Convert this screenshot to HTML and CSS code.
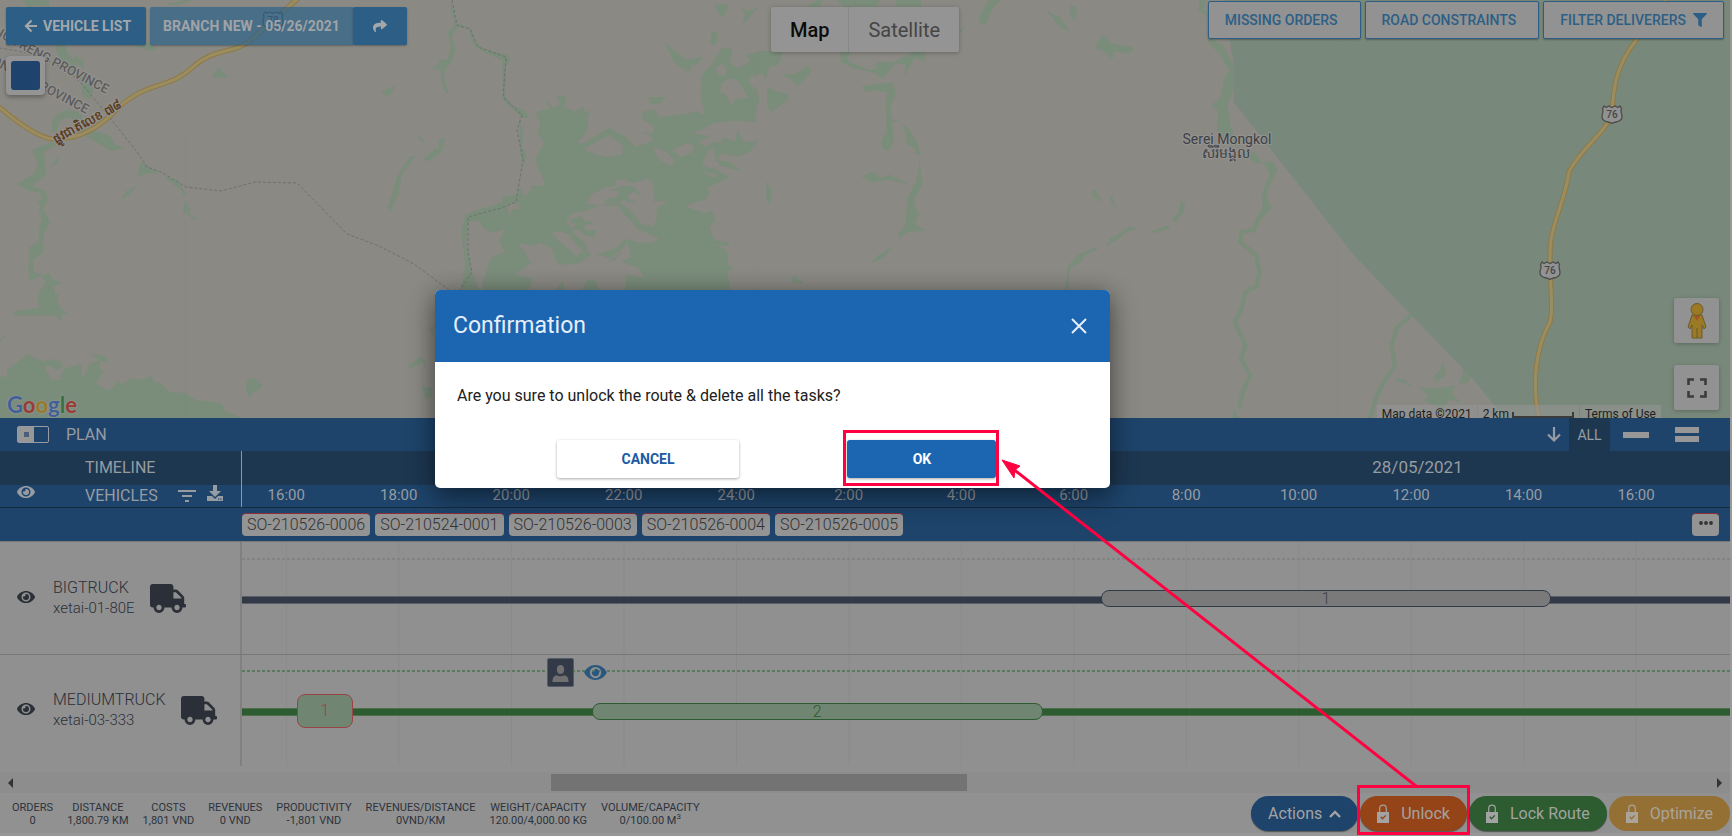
FILE: index.html
```
<!DOCTYPE html>
<html lang="en">
<head>
<meta charset="utf-8">
<meta name="viewport" content="width=device-width, initial-scale=1">
<title>Plan - Confirmation</title>
<link rel="stylesheet" href="styles.css">
</head>
<body>
<svg class="defs" aria-hidden="true">
  <symbol id="eye" viewBox="0 64 576 384"><path d="M572.52 241.4C518.29 135.59 410.93 64 288 64S57.68 135.64 3.48 241.41a32.35 32.35 0 0 0 0 29.19C57.71 376.41 165.07 448 288 448s230.32-71.64 284.52-177.41a32.35 32.35 0 0 0 0-29.19zM288 400a144 144 0 1 1 144-144 143.93 143.93 0 0 1-144 144zm0-240a95.31 95.31 0 0 0-25.31 3.79 47.85 47.85 0 0 1-66.9 66.9A95.78 95.78 0 1 0 288 160z"/></symbol>
  <symbol id="truck" viewBox="0 0 640 512"><path d="M624 352h-16V243.9c0-12.7-5.1-24.9-14.1-33.9L494 110.1c-9-9-21.2-14.1-33.9-14.1H416V48c0-26.5-21.5-48-48-48H48C21.5 0 0 21.5 0 48v320c0 26.5 21.5 48 48 48h16c0 53 43 96 96 96s96-43 96-96h128c0 53 43 96 96 96s96-43 96-96h48c8.8 0 16-7.2 16-16v-32c0-8.8-7.2-16-16-16zM160 464c-26.5 0-48-21.5-48-48s21.5-48 48-48 48 21.5 48 48-21.5 48-48 48zm320 0c-26.5 0-48-21.5-48-48s21.5-48 48-48 48 21.5 48 48-21.5 48-48 48zm80-208H416V144h44.1l99.9 99.9V256z"/></symbol>
  <symbol id="lock" viewBox="0 0 12 20"><path d="M2.700 9V4.500a3.300 3.300 0 0 1 6.600 0V9" fill="none" stroke="currentColor" stroke-width="1.200"/><path fill-rule="evenodd" d="M0 8h12v11H0zM3.200 13.200l2.300 2.600 3.800-4-1-.9-2.800 2.900-1.300-1.500z"/></symbol>
  <symbol id="shield" viewBox="0 0 22 20"><path d="M3 2l2 1.500L8 2l3 1.500L14 2l3 1.500L19 2l1.500 2.500c-1.500 3 .5 5 .5 8 0 4-3 5-6 5.500-2 .3-3 .5-4 1.500-1-1-2-1.200-4-1.500-3-.5-6-1.500-6-5.500 0-3 2-5 .5-8z" fill="#929292" stroke="#4c4c4c" stroke-width="1.300"/></symbol>
</svg>

<div class="page">
  <section class="map" aria-label="Map">
    <svg class="map-art" viewBox="0 0 1732 418" preserveAspectRatio="xMidYMid slice" aria-hidden="true">
      <g class="wood" transform="scale(.33333)">
        <path d="M68 0l20 22 30-8 32 8V0zM500 14l60-14h25l-45 14zM410 140l40-14 22 20-8 8zM170 120l28 4 6 34 50 50 2-22-30-24 6 30 10 30 46 30-14 46-22-6-8-54-50-44-22-40zM640 232l18-32 30 34zM1146 276l46-22-24 38zM1300 208l20-18v16zM160 398c-10-50 30-72 62-66 30 4 42 36 40 54l70 20 14 26 30 12-40 8-50-30-50-26c2-20-10-40-30-42-20 0-34 22-32 40zM100 448l56-20 30-2-50 30 4 70-40 32 40 16 6 24-16 36 20 26h-20l-10-26 10-36-8-20-40-8-30-20 50-26 14-24zM152 500l28-36-4 26zM366 600l16-28 32-16-20 26zM415 530l8-42 16 4 40 28h-30zM504 530l30 10 30 48-10-2-6-14-44-34zM550 640l10-40 12 20 2 24 20 12-10 4-20-20zM1248 400l36 28-20-6zM1270 480l40-36 10 4v14l-30 20zM1250 468l-40 52-12 60-24 56-8-12 14-44 14-52 40-60z"/>
        <path d="M126 600h12l-4 34 20 30-20 40-2 56-32 20 6 36 24 10 20-8 10 18 26 14-22 10 4 26 14-6-10 14 14 34 20 12-20 4 4 22-22-20H44v-12l78-10-8-26 12-30 14-20-14-20-34 14-4-40 4-30-2-30 28-16 4-50 16-40-24-30zM0 1020l28-18-28 26zM274 1058l50 14v16l-24-6zM0 1128l24 4v-20l60-50 50 22c20-8 40-8 56 4v16l-20 6c-12-10-26-20-30-8 0 20 16 30 20 38h26l-4-14 16-20 50-16v40l8-4 14-34 34-12-4 22 14 10-22 36 34 24 20-14 10-18 12 14 30-20 36 6 22-14 10 20 20 2 26 30h44l40 26 30-2 42 10 10 20 50 22v10H0zM744 1140l20-8 28 24-10 12-20 10-10 16-10-20z"/>
        <path d="M1226 1096l40-24 14 10 4 30-14-26-36 20zM1268 1160l30 4 2 26-20 8zM1290 990l15-14v30z"/>
      </g>
      <g class="wood" transform="translate(440 0) scale(.35714 .33333)">
        <path d="M34 0L48 72 90 84 104 130 135 150 190 164 200 180 188 200 187 290 205 315 240 332 254 354 234 354 180 300 178 182 130 158 95 135 84 86 52 80 36 106 46 150 34 190 18 205 14 240 30 292 10 260 4 212 0 204V180L24 178 34 140 24 96 44 76 32 30zM225 350L236 400 232 440 246 465 238 495 228 460zM74 640L62 700 70 760 74 800 60 870H112L86 800 96 730 76 700 96 668z"/>
        <path d="M298 300L318 322 328 322 340 304 328 292 340 286 356 290 352 310 350 322 382 334 402 320 408 334 424 336 416 350 418 380 408 405 388 430 410 428 440 408 476 384 520 408 550 440 578 432 600 420 594 408 565 396 600 400 602 378 572 360 568 336 606 328 614 350 690 342 720 334 745 348 732 290 736 225 762 195 790 145 822 146 820 170 812 185 836 205 870 185 860 165 900 153 964 156 950 195 925 200 916 235 905 220 872 232 866 245 890 270 898 305 888 320 886 366 830 362 770 368 745 385 708 400 760 408 725 428 750 440 765 425 790 430 792 412 830 425 836 386 852 425 895 422 870 455 840 468 786 462 782 480 820 488 848 514 790 498 770 505 815 534 780 548 750 565 756 585 744 600 700 612 694 622 726 632 744 640 766 632 774 660 758 680 764 705 774 722 812 726 810 738 778 734 800 750 812 765 806 790 824 806 808 812 815 870H120L130 800 84 700 80 640 180 606 172 590 215 585 230 560 240 590 258 570 258 558 300 556 284 520 268 480 294 430 276 400 284 370 272 345 276 334 310 326z"/>
        <path d="M632 128l60 50 48-8-18 24h-14l-8 24-40-28zM770 14h40l-8 30-14 4-10-14zM848 22l20 12 28-14-22 26-24 30 6-34zM762 96l16 2 2 26-12 14-8-14zM1030 20l30-20h12l-4 20zM1115 0h120l-10 20h-90zM1280 0h70v20h-70zM958 222l36 2 38-28 10 16-6 14-32 32-20-20zM918 260l24 14 36 8v18l-48 38-12-30zM586 290l20 2 30-2-16 20-30 4zM1124 156h30l-10 20 6 10 24 10 26 14 30-6-14-10 20-10 30 4 30-14 30-18h36l-4 26-26-8-14 24-16 30 6-34-30-4-16 22-20 24-30-20-46-10-40-20zM1182 262l20-8 68-6 10 30-16 40 4 40 26 4-26 2 6 56-12 34-20-6-4-24 14-30 2-50-4-40 6-26-30-8-30 6zM1300 372l20 20 20 40 10 34-20-6 6-14-24-10zM1346 480l8 70-24 50 6 30 8 10-10 30 28 22-50 4-22 20-4-16 20-26 6-80 24-50zM1184 530l30-16 20 20 30-10 54 30-60-14-46 8zM916 542l14 26v30l-8 16-6-20zM1210 788l20-22 42-26-28 34zM984 838l12-14 26 28-30-4zM0 420l18-6-10 40-8 8z"/>
      </g>
      <g class="land" transform="translate(440 0) scale(.35714 .33333)">
        <path d="M774 206l16-16 14 12v26l-22-4zM790 250l24-16 20 6 20 30 12 24-38 4-8 24-14-34-18-12zM406 450l20-16 48-30 30 24 12 12-4 24-40 8-30-8zM600 440l40 18 18 22-6 18-30-16-16-20zM652 450l44-22 20 10-10 20-26 14zM756 446L770 450 774 480 790 500 755 504 736 492zM738 514L780 524 770 532 745 520z"/>
        <path d="M80 672L94 660 118 665 120 682 150 698 186 686 168 720 184 756 150 770 134 800 130 830 108 840 92 820 88 790 75 740zM190 614L226 608 224 628 205 630 198 648zM220 728L262 738 285 728 315 745 335 795 395 790 430 760 480 775 515 745 528 726 538 770 510 785 560 805 576 834 525 822 522 870H250L262 835 212 824 258 790 240 755zM414 612L425 585 460 565 495 555 492 540 520 538 545 550 580 535 600 550 602 605 640 602 630 612 608 625 612 650 600 680 565 670 530 625 500 608 450 615zM358 660L372 640 410 634 450 616 500 618 530 655 565 690 615 715 600 728 560 728 525 716 500 740 470 755 430 765 400 740 375 700 372 680 358 672zM314 700L335 692 375 708 416 758 395 755 385 770 350 735z"/>
      </g>
      <g class="wood" transform="translate(440 0) scale(.35714 .33333)">
        <path d="M414 424l60-36 20 22 46 28-20 4-46-36-36 20zM476 572L512 556 545 560 572 588 545 576 530 582 530 598 552 604 530 608 514 598 506 614 540 650 560 676 585 690 560 692 535 655 495 606 462 612 470 596 500 590 504 572zM364 660L400 648 406 662 428 664 430 674 408 672 408 690 445 692 430 712 408 706 390 690 374 688 384 672 370 670zM376 700L410 730 420 764 400 750 370 716zM344 764l16 10 24-14-14 24-24 2zM474 784l20-14 18-14-20 26zM326 870l20-28 4 28zM400 870l14-30 20-2 16 32zM320 760L345 800 326 780z"/>
      </g>
      <g class="wood" transform="translate(940 0) scale(.33333)">
        <path d="M150 0h36l-26 26-20 50-20-6 4-30zM60 90l22-14-14 16-8 10zM322 32l40 20 30 42-30-12zM394 16l16 4 4 24-8 16-14-16zM470 146l6-20 14-20 14 4 10 20 40 8h24l6 12-14 10-36-4-14 2 4 12-10 10-10-20zM456 576l12-10 8 18 14 16v6l-26-12zM512 596l14-18-4 14 10 36-14-20zM500 742l14-26 60-38 28 14-30-2-40 30zM634 694l56-18 4 8-50 16zM704 656l22-26-4-26 18 2-8 10-2 20zM378 870l6-40v-30l34-36 54-24 6 6-40 20-10 20-34 18-4 40-4 26z"/>
      </g>
      <g transform="translate(1170 0) scale(.35868 .33333)">
        <path class="park" d="M150 0H1566V1254H935L850 1140 675 945 515 765 395 600 180 305V190z"/>
        <path class="wood" d="M84 0H102L96 30 126 44V120L150 135 178 190 180 265 172 290 164 315 170 370 190 440 240 490 290 485 302 510 295 530 278 560 272 590 286 620 280 635 262 640 250 660H240L262 620 258 590 266 560 282 520 270 500 240 460 190 440 150 420 134 390 136 330 118 318 144 290 152 240 168 210 140 160 110 130 104 46 82 30z"/>
        <path class="brook" d="M265 600l10 25-30 40-7 25-35 5-5 30 45 40 10 55-10 40-30 15-10 50-20 40 30 70-12 40 25 50-20 50-10 50M675 945l-40 40-15 50 10 60-30 50-20 40-20 70M38 606l-4 30-20 26"/>
        <path class="wood" d="M764 1086l8 40-26 20-10-14 20-22zM625 1136l30 2 26 22-40-14zM694 1160l50 6 54-10-8 26 24 26-30-10-14 20-10 36-16-10 4-24-36-16 10-20zM808 1150l14-40 20 20-10 20zM176 1254l6-30 12 30z"/>
      </g>
      <path class="tile" d="M186 130V418M758 50V418M1338 40V418M1625 40V418M1240 267H1732"/>
      <path class="border" d="M0 48Q60 55 88 90Q125 135 138 152L148 167 162 172 187 187 222 191 256 182 298 183 348 234 380 246 415 264 450 290M453 0l5 25 13 4 8 18 28 10-3 40 19 18-5 15 6 30-7 42-15 6-33 9v35l4 20-12 18"/>
      <path class="road-edge" d="M0 107Q38 139 55 139Q90 140 120 107C150 80 170 90 195 66C215 48 235 54 252 40Q285 10 302 -4"/>
      <path class="road" d="M0 107Q38 139 55 139Q90 140 120 107C150 80 170 90 195 66C215 48 235 54 252 40Q285 10 302 -4"/>
      <path class="road-edge" d="M1669-4Q1662 10 1648 28C1618 58 1614 85 1613 114C1605 135 1580 150 1570 172C1566 200 1556 215 1552 240C1548 270 1556 305 1551 322C1538 345 1532 380 1540 418"/>
      <path class="road" d="M1669-4Q1662 10 1648 28C1618 58 1614 85 1613 114C1605 135 1580 150 1570 172C1566 200 1556 215 1552 240C1548 270 1556 305 1551 322C1538 345 1532 380 1540 418"/>
      <use href="#shield" x="263" y="10" width="22" height="20"/>
      <use href="#shield" x="1602" y="104" width="22" height="20"/>
      <use href="#shield" x="1540" y="260" width="22" height="20"/>
      <g class="shield-text"><text x="274" y="24">78</text><text x="1613" y="118">76</text><text x="1551" y="274">76</text></g>
      <g class="province"><text transform="translate(107 94) rotate(28)">STUNG TRENG PROVINCE</text><text transform="translate(87 114) rotate(28)">MONDUL PROVINCE</text></g>
      <text class="road-name" transform="translate(57 144) rotate(-29)">ផ្លូវជាតិលេខ ៧៨</text>
      <g class="place"><text x="1228" y="144">Serei Mongkol</text><text x="1227" y="158">សិរីមង្គល</text></g>
    </svg>

    <div class="toolbar">
      <div class="toolbar-left">
        <button class="btn btn-blue" type="button"><svg class="i-arrow" viewBox="0 0 14 14" aria-hidden="true"><path d="M7.500 1.500L2 7l5.500 5.500M2.500 7H13" fill="none" stroke="currentColor" stroke-width="2.200"/></svg>VEHICLE LIST</button>
        <div class="btn-group">
          <button class="btn btn-faded" type="button">BRANCH NEW - 05/26/2021</button>
          <button class="btn btn-blue btn-share" type="button" aria-label="Share"><svg viewBox="0 0 512 512" aria-hidden="true"><path d="M503.691 189.836L327.687 37.851C312.281 24.546 288 35.347 288 56.015v80.053C127.371 137.907 0 170.100 0 322.326c0 61.441 39.581 122.309 83.333 154.132 13.653 9.931 33.111-2.533 28.077-18.631C66.066 312.814 132.917 274.316 288 272.085V360c0 20.700 24.300 31.453 39.687 18.164l176.004-152c11.071-9.562 11.086-26.753 0-36.328z"/></svg></button>
        </div>
      </div>
      <div class="map-type">
        <button class="current" type="button">Map</button>
        <button type="button">Satellite</button>
      </div>
      <div class="toolbar-right">
        <button class="btn btn-line" type="button">MISSING ORDERS</button>
        <button class="btn btn-line" type="button">ROAD CONSTRAINTS</button>
        <button class="btn btn-line btn-filter" type="button">FILTER DELIVERERS <svg viewBox="0 0 512 512" aria-hidden="true"><path d="M487.976 0H24.028C2.710 0-8.047 25.866 7.058 40.971L192 225.941V432c0 7.831 3.821 15.170 10.237 19.662l80 55.980C298.020 518.690 320 507.493 320 487.980V225.941l184.947-184.970C520.021 25.896 509.338 0 487.976 0z"/></svg></button>
      </div>
    </div>
    <button class="swatch" type="button" aria-label="Layer colour"><span></span></button>

    <div class="map-tools">
      <button type="button" aria-label="Street View"><svg width="20" height="36" viewBox="0 0 20 36" aria-hidden="true"><g fill="#9a7a24" stroke="#6b5a30" stroke-width="1"><path d="M5 12h10l4 12-2 2-2-4v13H5V22l-2 4-2-2z"/><circle cx="10" cy="6.500" r="6"/></g><path d="M7 13h6l-3 5z" fill="#a0572a"/><path d="M10 25v10" stroke="#6b5a30"/></svg></button>
      <button type="button" aria-label="Full screen"><svg width="20" height="20" viewBox="0 0 20 20" aria-hidden="true"><path d="M1.500 7V1.500H7M13 1.500h5.500V7M18.500 13v5.500H13M7 18.500H1.500V13" fill="none" stroke="#3b3b3b" stroke-width="2.600"/></svg></button>
    </div>
    <div class="google" aria-label="Google"><span class="g1">G</span><span class="g2">o</span><span class="g3">o</span><span class="g1">g</span><span class="g4">l</span><span class="g2">e</span></div>
    <div class="credits"><span>Map data ©2021</span><span class="scale">2 km <i></i></span><a href="#terms">Terms of Use</a></div>
  </section>

  <section class="plan">
    <header class="plan-bar">
      <label class="plan-title"><input class="switch" type="checkbox">PLAN</label>
      <div class="plan-views">
        <button type="button" aria-label="Scroll down"><svg width="14" height="15" viewBox="0 0 14 15" aria-hidden="true"><path d="M7 0v13M1 7.500l6 6 6-6" fill="none" stroke="currentColor" stroke-width="2.200"/></svg></button>
        <button class="view-all" type="button">ALL</button>
        <button class="view-one" type="button" aria-label="Single row"><i></i></button>
        <button class="view-two" type="button" aria-label="Double row"><i></i><i></i></button>
      </div>
    </header>

    <div class="split head-date">
      <div class="side"><span class="side-label">TIMELINE</span></div>
      <div class="chart"><span class="date">28/05/2021</span></div>
    </div>
    <div class="split head-hours">
      <div class="side">
        <svg class="eye" aria-hidden="true"><use href="#eye"/></svg>
        <span class="side-label">VEHICLES</span>
        <svg class="i-sort" viewBox="0 0 18 12" aria-hidden="true"><path d="M0 1h18M4 6h10M7 11h4" stroke="currentColor" stroke-width="2"/></svg>
        <svg class="i-down" viewBox="0 0 16 16" aria-hidden="true"><path d="M6 0h4v6h4l-6 6-6-6h4z"/><path fill-rule="evenodd" d="M0 11h5l3 3 3-3h5v5H0zM11 13.500h1.200v1.200H11zM13.300 13.500h1.200v1.200h-1.200z"/></svg>
      </div>
      <div class="chart hours"><span>16:00</span><span>18:00</span><span>20:00</span><span>22:00</span><span>24:00</span><span>2:00</span><span>4:00</span><span>6:00</span><span>8:00</span><span>10:00</span><span>12:00</span><span>14:00</span><span>16:00</span></div>
    </div>
    <div class="orders">
      <button type="button">SO-210526-0006</button>
      <button type="button">SO-210524-0001</button>
      <button type="button">SO-210526-0003</button>
      <button type="button">SO-210526-0004</button>
      <button type="button">SO-210526-0005</button>
      <button class="more" type="button" aria-label="More orders"><svg width="14" height="4" viewBox="0 0 14 4" aria-hidden="true"><circle cx="2" cy="2" r="1.900"/><circle cx="7" cy="2" r="1.900"/><circle cx="12" cy="2" r="1.900"/></svg></button>
    </div>

    <div class="split lane lane-grey">
      <div class="side">
        <svg class="eye" aria-hidden="true"><use href="#eye"/></svg>
        <div class="vehicle"><strong>BIGTRUCK</strong><span>xetai-01-80E</span></div>
        <svg class="truck" aria-hidden="true"><use href="#truck"/></svg>
      </div>
      <div class="chart">
        <div class="dots"></div><div class="line"></div>
        <div class="bar" style="left:57.7%;width:30.3%">1</div>
      </div>
    </div>
    <div class="split lane lane-green">
      <div class="side">
        <svg class="eye" aria-hidden="true"><use href="#eye"/></svg>
        <div class="vehicle"><strong>MEDIUMTRUCK</strong><span>xetai-03-333</span></div>
        <svg class="truck" aria-hidden="true"><use href="#truck"/></svg>
      </div>
      <div class="chart">
        <div class="dots"></div><div class="line"></div>
        <div class="stop" style="left:3.7%;width:3.76%">1</div>
        <div class="bar" style="left:23.5%;width:30.3%">2</div>
        <div class="driver" style="left:20.5%">
          <span class="avatar"><svg width="17" height="18" viewBox="0 0 18 20" aria-hidden="true"><ellipse cx="9" cy="6" rx="4" ry="5"/><path d="M0 20c0-5 2-7 5-7.500 2 1.500 6 1.500 8 0 3 .5 5 2.500 5 7.500z"/></svg></span>
          <svg class="eye eye-blue" aria-hidden="true"><use href="#eye"/></svg>
        </div>
      </div>
    </div>

    <div class="scrollbar"><span class="tri-left"></span><div class="track"><div class="thumb" style="left:31.6%;width:24.4%"></div></div><span class="tri-right"></span></div>
  </section>

  <footer class="footer">
    <dl class="stats">
      <div><dt>ORDERS</dt><dd>0</dd></div>
      <div><dt>DISTANCE</dt><dd>1,800.79 KM</dd></div>
      <div><dt>COSTS</dt><dd>1,801 VND</dd></div>
      <div><dt>REVENUES</dt><dd>0 VND</dd></div>
      <div><dt>PRODUCTIVITY</dt><dd>-1,801 VND</dd></div>
      <div><dt>REVENUES/DISTANCE</dt><dd>0VND/KM</dd></div>
      <div><dt>WEIGHT/CAPACITY</dt><dd>120.00/4,000.00 KG</dd></div>
      <div><dt>VOLUME/CAPACITY</dt><dd>0/100.00 M<sup>3</sup></dd></div>
    </dl>
    <div class="actions">
      <button class="pill blue" type="button">Actions <svg width="12" height="8" viewBox="0 0 12 8" aria-hidden="true"><path d="M1 7l5-5 5 5" fill="none" stroke="currentColor" stroke-width="2.400"/></svg></button>
      <button class="pill orange marked" type="button"><svg class="lock" aria-hidden="true"><use href="#lock"/></svg>Unlock</button>
      <button class="pill green" type="button"><svg class="lock" aria-hidden="true"><use href="#lock"/></svg>Lock Route</button>
      <button class="pill amber" type="button"><svg class="lock" aria-hidden="true"><use href="#lock"/></svg>Optimize</button>
    </div>
  </footer>

  <div class="dialog" role="dialog" aria-labelledby="dialog-title">
    <header><h1 id="dialog-title">Confirmation</h1><button type="button" aria-label="Close"><svg width="16" height="16" viewBox="0 0 16 16" aria-hidden="true"><path d="M1 1l14 14M15 1L1 15" stroke="currentColor" stroke-width="2"/></svg></button></header>
    <p>Are you sure to unlock the route &amp; delete all the tasks?</p>
    <div class="choices">
      <button class="cancel" type="button">CANCEL</button>
      <button class="ok marked" type="button">OK</button>
    </div>
  </div>
  <svg class="pointer" viewBox="0 0 1732 836" preserveAspectRatio="none" aria-hidden="true"><path d="M1416 786L1012 468" stroke="#ff0040" stroke-width="3"/><path d="M1002 460l18 6-5 4-1 8z" fill="#ff0040" stroke="#ff0040"/></svg>
</div>
</body>
</html>
```
FILE: styles.css
```
* { box-sizing: border-box; }
body { margin: 0; background: #999; color: #2d333c; font-family: Roboto, "Noto Sans", sans-serif; font-size: 16px; }
button { margin: 0; padding: 0; border: 0; background: none; color: inherit; font: inherit; cursor: pointer; }
svg { fill: currentColor; flex: none; }
.defs { position: absolute; width: 0; height: 0; }
.page { position: relative; display: flex; flex-direction: column; min-height: 100vh; padding-right: 2px; overflow: hidden; }

/* Map */
.map { position: relative; flex: 1; min-height: 320px; overflow: hidden; background: #8b8984; }
.map-art { position: absolute; inset: 0; width: 100%; height: 100%; }
.wood { fill: #7a8c7a; }
.land { fill: #8b8984; }
.park { fill: #78897b; }
.brook { fill: none; stroke: #7a8c7a; stroke-width: 12; }
.tile { fill: none; stroke: #808a82; stroke-opacity: .25; }
.border { fill: none; stroke: #6d716e; stroke-dasharray: 3 2; }
.road-edge { fill: none; stroke: #8d7a48; stroke-width: 5; }
.road { fill: none; stroke: #9c8d60; stroke-width: 3; }
.shield-text { font-size: 10px; font-weight: 500; fill: #454545; text-anchor: middle; }
.province { font-size: 13px; font-weight: 500; fill: #5c5c5c; stroke: #949390; stroke-width: 2; paint-order: stroke; text-anchor: end; }
.road-name { font-size: 12px; font-weight: 700; fill: #5b3d22; stroke: #949390; stroke-width: 2; paint-order: stroke; }
.place { font-size: 14px; fill: #3d4045; stroke: #949390; stroke-width: 2; paint-order: stroke; text-anchor: middle; }

.toolbar { position: relative; display: grid; grid-template-columns: 1fr auto 1fr; align-items: start; padding: 1px 6px 0; }
.toolbar-left { display: flex; gap: 4px; padding-top: 6px; }
.btn-group { display: flex; }
.btn { display: flex; align-items: center; justify-content: center; height: 38px; border-radius: 2px; font-size: 14px; font-weight: 500; white-space: nowrap; box-shadow: 0 1px 2px rgba(0,0,0,.3); }
.btn-blue { background: #2d5f86; color: #a3a7aa; font-weight: 700; padding: 0 15px 0 18px; }
.i-arrow { width: 14px; height: 14px; margin-right: 5px; }
.btn-faded { padding: 0 13px; background: rgba(45,98,138,.7); color: #a0a3a6; font-weight: 700; border-radius: 2px 0 0 2px; }
.btn-share { padding: 0 20px; }
.btn-share svg { width: 14px; height: 14px; }
.map-type { display: flex; margin-top: 6px; border-radius: 2px; background: #949494; box-shadow: 0 1px 4px rgba(0,0,0,.25); }
.map-type button { height: 45px; padding: 0 19px; color: #454545; font-size: 20px; }
.map-type button + button { border-left: 1px solid #888; }
.map-type .current { color: #0c0c0c; font-weight: 500; }
.toolbar-right { display: flex; justify-content: flex-end; gap: 4px; }
.btn-line { border: 1px solid #2d5f86; background: #929292; color: #2d5f86; padding: 0 22px 0 16px; }
.btn-filter { padding: 0 16px; gap: 7px; }
.btn-filter svg { width: 14px; height: 14px; }
.swatch { position: relative; display: block; width: 39px; height: 39px; margin: 4px 0 0 6px; padding: 5px; border-radius: 4px; background: #949494; box-shadow: 0 2px 4px rgba(0,0,0,.3); }
.swatch span { display: block; height: 29px; border-radius: 3px; background: #1e446d; }
.map-tools { position: absolute; right: 11px; bottom: 8px; display: grid; gap: 22px; }
.map-tools button { display: grid; place-items: center; width: 45px; height: 45px; border-radius: 2px; background: #929292; box-shadow: 0 1px 4px rgba(0,0,0,.25); }
.google { position: absolute; left: 7px; bottom: 0; font: 700 22px/26px Lato, sans-serif; text-shadow: 0 0 2px #a5a5a5; }
.g1 { color: #41609a; } .g2 { color: #983b34; } .g3 { color: #98792a; } .g4 { color: #366f47; }
.credits { position: absolute; right: 69px; bottom: -5px; display: flex; gap: 1px; color: #1e1e1e; font-size: 12px; line-height: 18px; }
.credits > * { padding: 0 5px; background: rgba(148,148,148,.6); color: inherit; text-decoration: none; }
.credits i { display: inline-block; width: 62px; height: 6px; border: 2px solid #3b3b3b; border-top: 0; }

/* Plan header */
.plan { background: #909090; }
.plan-bar { display: flex; justify-content: space-between; align-items: center; height: 33px; padding: 0 31px 0 17px; background: #1e446b; color: #979ca2; }
.plan-title { display: flex; align-items: center; gap: 17px; }
.switch { appearance: none; width: 32px; height: 17px; margin: 0; border: 1px solid #979ca2; border-radius: 2px; background: linear-gradient(#4a6079, #4a6079) 6px 5px / 5px 5px no-repeat, linear-gradient(90deg, #979797 16px, transparent 16px); }
.plan-views { display: flex; align-items: stretch; height: 33px; }
.plan-views button { display: flex; flex-direction: column; align-items: center; justify-content: center; gap: 3px; }
.plan-views .view-all { width: 41px; margin: 0 13px 0 8px; background: #1d3751; font-size: 14px; }
.plan-views i { display: block; width: 26px; height: 6px; background: #979797; }
.plan-views .view-two { margin-left: 26px; }
.plan-views .view-two i { width: 24px; }
.split { display: grid; grid-template-columns: 242px 1fr; }
.side { display: flex; align-items: center; }
.chart { position: relative; }
.head-date { height: 34px; background: #1d3751; color: #979ca2; }
.head-date .side { padding-bottom: 2px; }
.head-date .side, .head-hours .side { border-right: 1px solid #979797; }
.side-label { margin-left: 85px; }
.date { position: absolute; left: 74%; top: 4px; width: 10%; text-align: center; font-size: 17px; line-height: 24px; }
.head-hours { height: 23px; background: #1e446b; color: #979ca2; border-bottom: 1px solid #182a3e; }
.eye { width: 18px; height: 12px; margin-left: 17px; }
.head-hours .eye { margin-bottom: 8px; }
.head-hours .side-label { margin-left: 50px; line-height: 20px; padding-bottom: 1px; }
.i-sort { width: 18px; height: 12px; margin-left: 20px; }
.i-down { width: 16px; height: 16px; margin: -6px 0 0 11px; }
.hours { display: flex; overflow: hidden; font-size: 15px; line-height: 21px; }
.hours span { flex: 0 0 7.56%; text-align: center; }
.hours span:first-child { margin-left: -12px; }
.orders { display: flex; align-items: center; gap: 5px; height: 33px; padding: 0 11px 0 242px; background: #1e446b; }
.orders button { height: 23px; padding: 0 5px; border-top: 1px solid #8a2e3a; border-radius: 4px; background: #949494; color: #333; font-weight: 300; line-height: 20px; white-space: nowrap; }
.orders .more { display: grid; place-items: center; width: 27px; margin-left: auto; padding-bottom: 5px; }

/* Lanes */
.lane { height: 113px; border-top: 1px solid #777; color: #2b2f38; }
.lane-green { height: 112px; }
.lane .side { border-right: 2px solid #808080; padding-bottom: 8px; }
.vehicle { display: grid; margin: 0 15px -7px 18px; line-height: 20px; }
.vehicle strong { font-weight: 300; }
.vehicle span { font-size: 15px; font-weight: 300; }
.truck { width: 36px; height: 29px; margin-bottom: -8px; }
.lane .eye { margin-bottom: -5px; }
.lane .chart { background: linear-gradient(90deg, #8a8a8a 1px, transparent 1px) 44px 0 / 7.56% 100%; }
.dots { position: absolute; left: 0; right: 0; top: 16px; height: 2px; background: repeating-linear-gradient(90deg, #838383 0 3px, transparent 3px 5px); }
.line { position: absolute; left: 0; right: 0; top: 54px; height: 8px; border: 1px solid #59606a; border-width: 1px 0; background: #333a47; }
.bar { position: absolute; top: 48px; height: 17px; border: 1px solid #333a47; border-radius: 8px; background: #7a7a7a; color: #3d424a; line-height: 15px; font-weight: 300; text-align: center; }
.lane-green .dots { top: 15px; background: repeating-linear-gradient(90deg, #5c7a60 0 3px, transparent 3px 5px); }
.lane-green .line { top: 53px; background: #2c5c30; border-color: #4d704f; }
.lane-green .bar { border-color: #2c5c30; background: #718672; color: #2c5c30; }
.stop { position: absolute; top: 39px; height: 34px; border: 1px solid #984444; border-radius: 8px; background: #718672; color: #984444; line-height: 32px; font-weight: 300; text-align: center; }
.driver { position: absolute; top: 3px; display: flex; align-items: center; }
.avatar { display: grid; place-items: center; width: 27px; height: 29px; border: 1px solid #555c68; border-radius: 2px; background: #333a47; color: #707070; }
.eye-blue { width: 23px; height: 15px; color: #2a577e; }
.lane .eye-blue { margin: 0 0 0 10px; }
.scrollbar { display: flex; align-items: center; justify-content: space-between; height: 21px; margin-top: 6px; padding: 0 8px; background: #8d8d8d; }
.track { position: relative; flex: 1; height: 17px; }
.thumb { position: absolute; height: 17px; background: #737373; }
.tri-left, .tri-right { border: 5px solid transparent; border-right: 5px solid #333; border-left: 0; }
.tri-right { border-right: 0; border-left: 5px solid #333; }

/* Footer */
.footer { display: flex; justify-content: space-between; align-items: flex-start; height: 43px; padding: 3px 0 0 12px; background: #919191; border-bottom: 3px solid #979797; }
.stats { display: flex; gap: 14px; margin: 5px 0 0; font-size: 11px; line-height: 13px; text-align: center; white-space: nowrap; }
.stats dd { margin: 0; }
.stats sup { font-size: 8px; line-height: 1px; }
.actions { display: flex; gap: 2px; }
.pill { position: relative; display: flex; align-items: center; height: 35px; padding: 0 17px; border-radius: 18px; color: #a3a3a3; white-space: nowrap; box-shadow: 0 1px 1px rgba(0,0,0,.4); }
.pill.blue { background: #1e446b; gap: 7px; }
.pill.orange { background: #954417; }
.pill.green { background: #2c5c30; }
.pill.amber { background: #957035; color: #aaa49a; box-shadow: none; }
.lock { width: 12px; height: 20px; margin-right: 12px; }

/* Dialog */
.dialog { position: absolute; top: 290px; left: 435px; width: 39%; min-width: 520px; border-radius: 5px; background: #fff; box-shadow: 0 10px 28px rgba(0,0,0,.4), 0 0 20px rgba(0,0,0,.2); }
.dialog header { display: flex; justify-content: space-between; align-items: center; height: 72px; padding: 0 23px 0 18px; border-radius: 5px 5px 0 0; background: #1b65b1; color: #e6eef8; }
.dialog h1 { margin: 0; padding-bottom: 2px; font-size: 23px; font-weight: 400; }
.dialog header svg { display: block; }
.dialog p { margin: 0; padding: 24px 22px 35px; color: #212121; line-height: 19px; }
.choices { display: flex; justify-content: space-between; padding: 0 114px 10px 122px; }
.choices button { position: relative; height: 38px; border-radius: 3px; font-size: 14px; font-weight: 700; box-shadow: 0 1px 3px rgba(0,0,0,.35); }
.choices .cancel { width: 182px; color: #1b5aa5; }
.choices .ok { width: 149px; background: #1b65b1; color: #fff; }
.marked::after { content: ""; position: absolute; inset: -10px -3px -8px -4px; border: 3px solid #ff0040; }
.pill.marked::after { inset: -11px -3px -4px; }
.pointer { position: absolute; inset: 0; width: 100%; height: 100%; pointer-events: none; }
```
